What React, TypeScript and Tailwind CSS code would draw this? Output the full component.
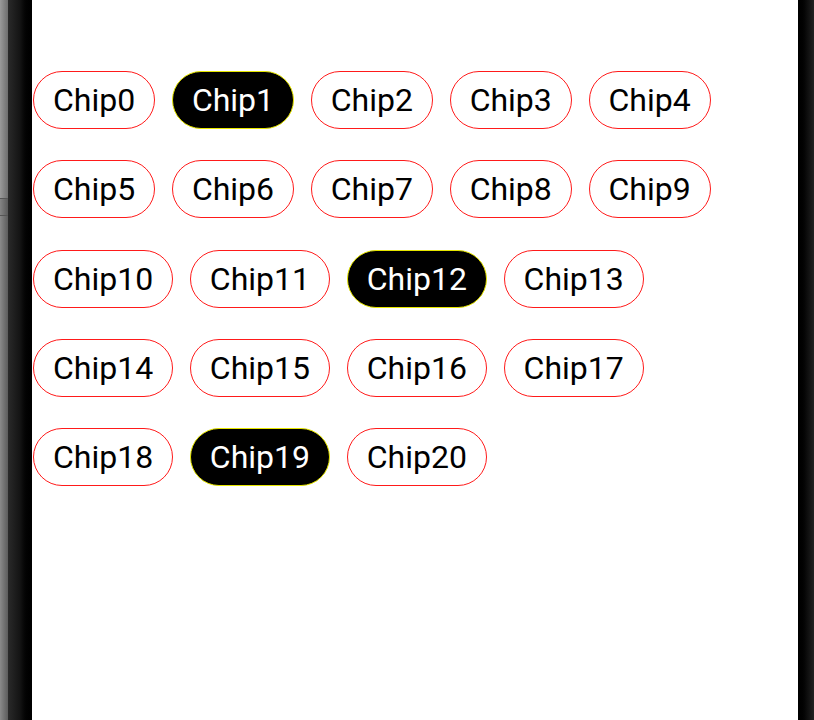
const chips = Array.from({ length: 21 }, (_, i) => `Chip${i}`);
const selected = new Set([1, 12, 19]);

const Chip = ({ label, active }: { label: string; active: boolean }) => (
  <div
    className={
      active
        ? "h-[58px] px-[19px] flex items-center rounded-full border border-[#e6e600] bg-black text-white"
        : "h-[58px] px-[19px] flex items-center rounded-full border border-[#ff1a1a] bg-white text-black"
    }
  >
    <span className="text-[32px] leading-none">{label}</span>
  </div>
);

export default function App() {
  return (
    <div
      className="flex h-[720px] w-full overflow-hidden"
      style={{ fontFamily: "Roboto, 'Liberation Sans', sans-serif" }}
    >
      {/* LEFT BEZEL */}
      <div className="flex w-[32px] flex-shrink-0">
        <div className="flex w-[8px] flex-col">
          <div className="h-[198px] bg-gradient-to-r from-[#9a9a9a] to-[#6e6e6e]" />
          <div className="h-[18px] bg-gradient-to-r from-[#858585] to-[#5a5a5a] border-y border-[#555]" />
          <div className="flex-1 bg-gradient-to-r from-[#8a8a8a] to-[#5c5c5c]" />
        </div>
        <div className="flex-1 bg-gradient-to-r from-[#2a2a2a] via-[#141414] to-black" />
      </div>

      {/* SCREEN */}
      <div className="flex-1 bg-white pt-[71px] pl-[1px] pr-[20px]">
        <div className="flex flex-wrap gap-x-[16.7px] gap-y-[31.3px]">
          {chips.map((c, i) => (
            <Chip key={c} label={c} active={selected.has(i)} />
          ))}
        </div>
      </div>

      {/* RIGHT BEZEL */}
      <div className="w-[16px] flex-shrink-0 bg-gradient-to-r from-black via-[#0a0a0a] to-[#222]" />
    </div>
  );
}
